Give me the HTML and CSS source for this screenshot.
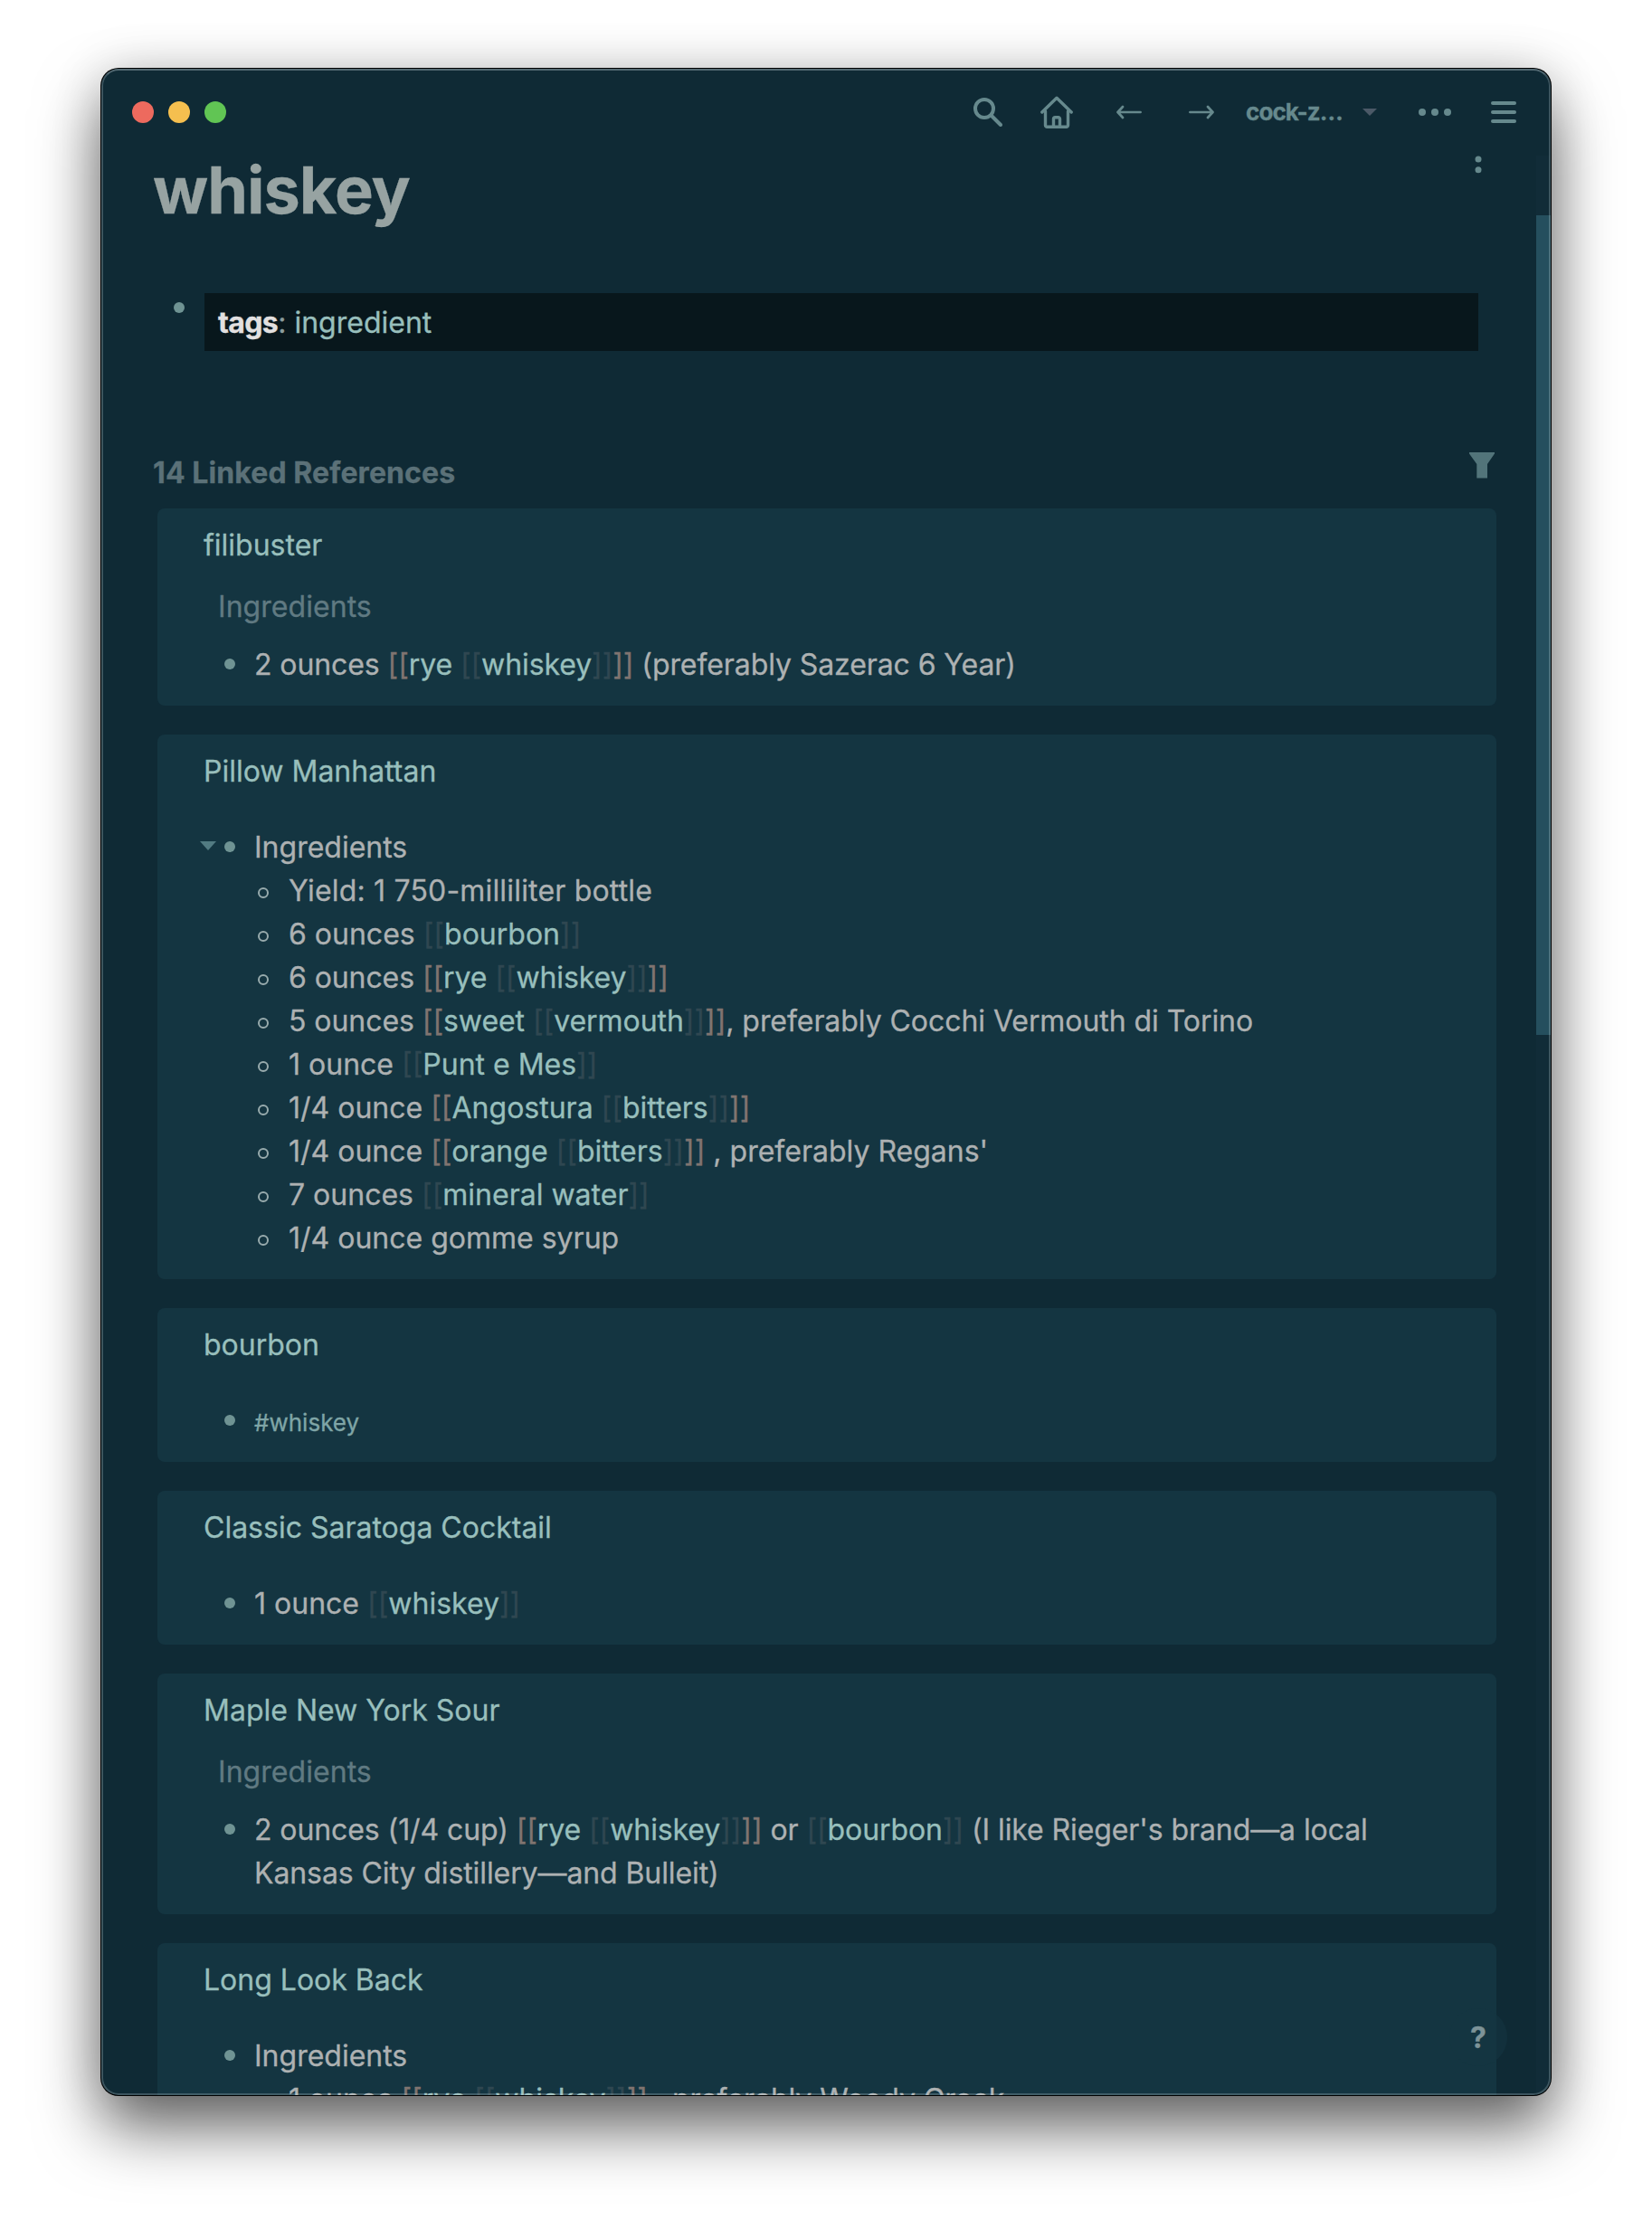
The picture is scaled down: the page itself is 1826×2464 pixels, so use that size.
FILE: index.html
```
<!DOCTYPE html>
<html lang="en">
<head>
<meta charset="utf-8">
<title>whiskey</title>
<link rel="stylesheet" href="styles.css">
</head>
<body>
<div class="window">
  <header class="toolbar">
    <div class="lights"><i class="light red"></i><i class="light yellow"></i><i class="light green"></i></div>
    <nav class="tools">
      <svg class="tool-search" width="32" height="32" viewBox="0 0 32 32" fill="none" stroke="currentColor" stroke-width="4"><circle cx="12" cy="12" r="10"/><path d="M19.5 19.5L30 30" stroke-linecap="round" /></svg>
      <svg class="tool-home" width="36" height="36" viewBox="0 0 36 36" fill="none" stroke="currentColor" stroke-width="3.4" stroke-linecap="round" stroke-linejoin="round"><path d="M1.8 18L18 2.2L34.200 18"/><path d="M5.500 17v15.500a1.800 1.800 0 0 0 1.800 1.800h21.400a1.800 1.800 0 0 0 1.800-1.800V17"/><path d="M14.500 34v-8.500a1.800 1.800 0 0 1 1.800-1.800h3.400a1.800 1.800 0 0 1 1.800 1.800V34"/></svg>
      <svg class="tool-back" width="28" height="16" viewBox="0 0 28 16" fill="none" stroke="currentColor" stroke-width="2.700" stroke-linecap="round" stroke-linejoin="round"><path d="M26.600 8H2M7 2L1.500 8L7 14"/></svg>
      <svg class="tool-next" width="28" height="16" viewBox="0 0 28 16" fill="none" stroke="currentColor" stroke-width="2.700" stroke-linecap="round" stroke-linejoin="round"><path d="M1.400 8H26M21 2L26.500 8L21 14"/></svg>
      <span class="graph">cock-z…</span>
      <svg class="tool-caret" width="16" height="8" viewBox="0 0 16 8"><path d="M0 0h16L8 8z" fill="#4b5967"/></svg>
      <svg class="tool-more" width="36" height="8" viewBox="0 0 36 8" fill="currentColor"><circle cx="4" cy="4" r="4"/><circle cx="18" cy="4" r="4"/><circle cx="32" cy="4" r="4"/></svg>
      <svg class="tool-menu" width="28" height="24" viewBox="0 0 28 24" fill="currentColor"><rect width="28" height="4" rx="2"/><rect y="10" width="28" height="4" rx="2"/><rect y="20" width="28" height="4" rx="2"/></svg>
    </nav>
  </header>
  <main class="page">
    <div class="title-row">
      <h1>whiskey</h1>
      <svg class="page-menu" width="8" height="20" viewBox="0 0 8 20" fill="currentColor"><circle cx="4" cy="4" r="3.500"/><circle cx="4" cy="15.700" r="3.500"/></svg>
    </div>
    <div class="tags-row"><i class="bullet"></i><p class="tags"><b>tags</b>: <a>ingredient</a></p></div>
    <div class="refs-head">
      <h2>14 Linked References</h2>
      <svg width="28" height="29" viewBox="0 0 28 29"><path d="M0 0h28v1.500L20 13v15.500H8.300V13L0 1.500z" fill="#52747a"/></svg>
    </div>
    <section class="refs">
      <article class="card">
        <h3>filibuster</h3>
        <p class="crumb">Ingredients</p>
        <div class="block"><i class="bullet"></i><p class="snug">2 ounces <s>[[</s><a>rye </a><u>[[</u><a>whiskey</a><u>]]</u><s>]]</s> (preferably Sazerac 6 Year)</p></div>
      </article>
      <article class="card">
        <h3>Pillow Manhattan</h3>
        <div class="block open"><i class="caret"></i><i class="bullet"></i><p>Ingredients</p></div>
        <ul>
          <li class="loose">Yield: 1 750-milliliter bottle</li>
          <li>6 ounces <u>[[</u><a>bourbon</a><u>]]</u></li>
          <li class="snug">6 ounces <s>[[</s><a>rye </a><u>[[</u><a>whiskey</a><u>]]</u><s>]]</s></li>
          <li class="close">5 ounces <s>[[</s><a>sweet </a><u>[[</u><a>vermouth</a><u>]]</u><s>]]</s>, preferably Cocchi Vermouth di Torino</li>
          <li>1 ounce <u>[[</u><a>Punt e Mes</a><u>]]</u></li>
          <li>1/4 ounce <s>[[</s><a>Angostura </a><u>[[</u><a>bitters</a><u>]]</u><s>]]</s></li>
          <li>1/4 ounce <s>[[</s><a>orange </a><u>[[</u><a>bitters</a><u>]]</u><s>]]</s> , preferably Regans'</li>
          <li>7 ounces <u>[[</u><a>mineral water</a><u>]]</u></li>
          <li>1/4 ounce gomme syrup</li>
        </ul>
      </article>
      <article class="card">
        <h3>bourbon</h3>
        <div class="block"><i class="bullet"></i><p class="hashtag">#whiskey</p></div>
      </article>
      <article class="card">
        <h3>Classic Saratoga Cocktail</h3>
        <div class="block"><i class="bullet"></i><p>1 ounce <u>[[</u><a>whiskey</a><u>]]</u></p></div>
      </article>
      <article class="card">
        <h3>Maple New York Sour</h3>
        <p class="crumb">Ingredients</p>
        <div class="block"><i class="bullet"></i><p class="snug">2 ounces (1/4 cup) <s>[[</s><a>rye </a><u>[[</u><a>whiskey</a><u>]]</u><s>]]</s> or <u>[[</u><a>bourbon</a><u>]]</u> (I like Rieger's brand—a local Kansas City distillery—and Bulleit)</p></div>
      </article>
      <article class="card">
        <h3>Long Look Back</h3>
        <div class="block"><i class="bullet"></i><p>Ingredients</p></div>
        <ul>
          <li class="close">1 ounce <s>[[</s><a>rye </a><u>[[</u><a>whiskey</a><u>]]</u><s>]]</s> , preferably Woody Creek</li>
        </ul>
      </article>
    </section>
  </main>
  <div class="scrollbar"><div class="thumb"></div></div>
  <div class="help">?</div>
</div>
</body>
</html>
```
FILE: styles.css
```
*, *::before, *::after { box-sizing: border-box; margin: 0; padding: 0; }
body {
  height: 2464px;
  padding: 76px 112px 0;
  overflow: hidden;
  background: #fff;
  font: 400 32px/48px Inter, sans-serif;
  color: #adb1b2;
  -webkit-text-stroke: .3px currentColor;
}
svg { display: block; flex: none; }
h1, h2, h3 { font-size: inherit; font-weight: inherit; }
s, u { text-decoration: none; }
i { display: block; flex: none; }

.window {
  position: relative;
  width: 1602px;
  height: 2240px;
  overflow: hidden;
  border-radius: 19px;
  background: #0f2a35;
  box-shadow: 0 0 0 1px #000, 0 36px 70px rgba(0, 0, 0, .6), 0 0 56px rgba(0, 0, 0, .14);
}
.window::after {
  content: "";
  position: absolute;
  inset: 0;
  border: 2px solid rgba(205, 220, 225, .24);
  border-top-color: rgba(205, 220, 225, .36);
  border-radius: 19px;
}

.toolbar {
  display: flex;
  align-items: center;
  justify-content: space-between;
  height: 96px;
  padding: 0 38px 0 34px;
  color: #66898d;
}
.lights { display: flex; gap: 16px; }
.light { width: 24px; height: 24px; border-radius: 50%; }
.red { background: #ed6a5e; }
.yellow { background: #f5bf4f; }
.green { background: #61c554; }
.tools { display: flex; align-items: center; }
.tool-home { margin-left: 42px; }
.tool-back { margin-left: 48px; }
.tool-next { margin-left: 52px; }
.graph { margin-left: 35px; width: 107px; font-size: 26px; font-weight: 700; line-height: 32px; letter-spacing: -.9px; white-space: nowrap; }
.tool-caret { margin-left: 22px; }
.tool-more { margin-left: 46px; }
.tool-menu { margin-left: 44px; }

.page { padding: 0 60px 0 57px; }
.title-row { display: flex; justify-content: space-between; }
h1 { font-size: 72px; font-weight: 700; line-height: 76px; letter-spacing: -1px; color: #97a3a2; }
.page-menu { margin-right: 16px; color: #66898d; }

.bullet { width: 12px; height: 12px; border-radius: 50%; background: #6f9393; }
.tags-row { display: flex; margin-top: 76px; padding: 0 20px 0 23px; }
.tags-row .bullet { margin: 10px 22px 0 0; }
.tags { flex: 1; padding: 9px 16px 7px 15px; background: #08171c; color: #8b9c9c; }
.tags b { font-weight: 700; letter-spacing: -.6px; color: #e2e0e0; }
a { color: #98bfbc; }

.refs-head { display: flex; justify-content: space-between; height: 48px; margin-top: 110px; padding-right: 2px; }
.refs-head svg { margin-top: 2px; }
h2 { padding-top: 1px; font-weight: 700; letter-spacing: .1px; color: #5b7178; }

.refs { display: flex; flex-direction: column; gap: 32px; margin: 16px 0 0 5px; }
.card { padding: 17px 60px 21px 51px; border-radius: 8px; background: #143541; }
.card h3 { color: #98bfbc; }
.crumb { margin: 20px 0 16px 16px; letter-spacing: .05px; color: #607a82; }
.block { display: flex; padding-left: 23px; }
h3 + .block { margin-top: 36px; }
.block .bullet { margin: 17px 21px 0 0; }
.block.open { padding-left: 0; }
.caret { width: 18px; height: 10px; margin: 17px 9px 0 -4px; background: #527b82; clip-path: polygon(0 0, 100% 0, 50% 100%); }
s { color: #807470; }
u { color: #2f4751; }
.snug { letter-spacing: -.09px; }
.close { letter-spacing: -.06px; }
.loose { letter-spacing: .18px; }
.hashtag { height: 48px; font-size: 26px; line-height: 51px; color: #7fa5a6; }

ul { list-style: none; padding-left: 60px; }
li { display: block; padding-left: 34px; }
li::before {
  content: "";
  float: left;
  width: 12px;
  height: 12px;
  margin: 20px 0 0 -34px;
  border: 2px solid #98abad;
  border-radius: 50%;
}

.scrollbar { position: absolute; top: 96px; right: 0; bottom: 0; width: 16px; padding-top: 66px; background: #112c38; }
.thumb { height: 906px; background: #254f5e; }
.help {
  position: absolute;
  right: 48px;
  bottom: 32px;
  width: 64px;
  height: 64px;
  border-radius: 50%;
  background: rgba(20, 53, 65, .6);
  color: #7d9398;
  font-weight: 700;
  line-height: 66px;
  text-align: center;
}
```
